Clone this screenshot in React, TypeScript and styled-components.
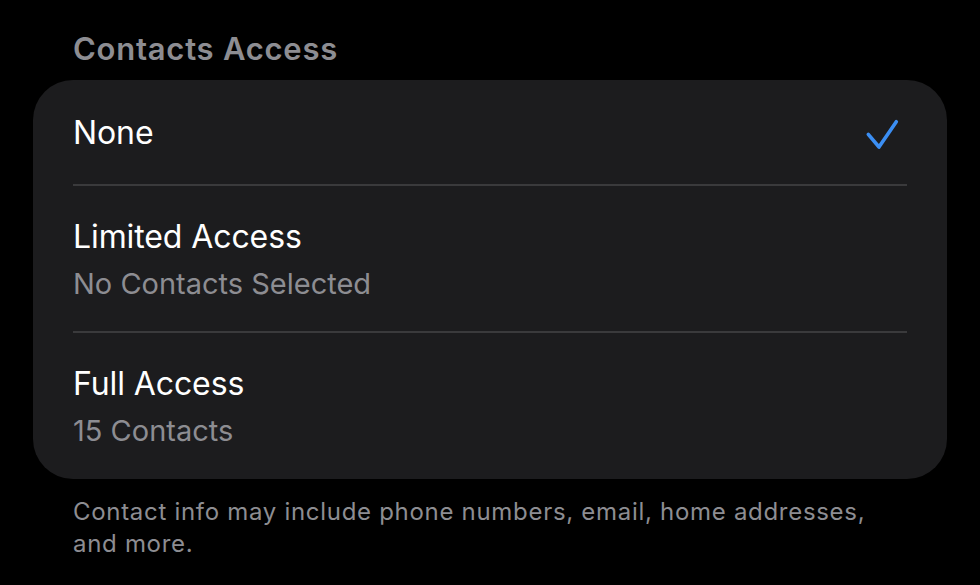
import React from "react";
import styled, { createGlobalStyle } from "styled-components";

const GlobalStyle = createGlobalStyle`
  html, body {
    margin: 0;
    padding: 0;
    background: #000000;
  }
  body {
    font-family: Inter, "Noto Sans", "Liberation Sans", sans-serif;
    -webkit-font-smoothing: antialiased;
  }
`;

const Page = styled.div`
  width: 980px;
  height: 585px;
  background: #000000;
  box-sizing: border-box;
  padding: 30px 33px 0 33px;
  overflow: hidden;
`;

const SectionHeader = styled.div`
  padding: 0 40px;
  font-size: 31px;
  line-height: 38px;
  font-weight: 600;
  color: #8d8d92;
  letter-spacing: 0.75px;
  margin-bottom: 12px;
`;

const Card = styled.div`
  width: 914px;
  background: #1c1c1e;
  border-radius: 40px;
  overflow: hidden;
`;

const Row = styled.div<{ $last?: boolean; $single?: boolean }>`
  margin: 0 40px;
  padding: ${(p) => (p.$single ? "33px 0 31px 0" : p.$last ? "31px 0 28px 0" : "31px 0 27px 0")};
  display: flex;
  align-items: center;
  justify-content: space-between;
  border-bottom: ${(p) => (p.$last ? "none" : "2px solid #3a3a3c")};
`;

const RowText = styled.div`
  display: flex;
  flex-direction: column;
  gap: 7px;
`;

const Title = styled.div`
  font-size: 32px;
  line-height: 40px;
  font-weight: 400;
  color: #ffffff;
  letter-spacing: -0.1px;
`;

const Subtitle = styled.div`
  font-size: 29px;
  line-height: 40px;
  font-weight: 400;
  color: #8d8d92;
  letter-spacing: 0px;
`;

const Check = styled.svg`
  width: 42px;
  height: 34px;
  flex: none;
  display: block;
`;

const Footer = styled.div`
  padding: 0 40px;
  margin-top: 17px;
  font-size: 24px;
  line-height: 32px;
  color: #8d8d92;
  letter-spacing: 0.7px;
`;

type Option = { title: string; subtitle?: string; selected?: boolean };

const options: Option[] = [
  { title: "None", selected: true },
  { title: "Limited Access", subtitle: "No Contacts Selected" },
  { title: "Full Access", subtitle: "15 Contacts" },
];

export default function App() {
  return (
    <>
      <GlobalStyle />
      <Page>
        <SectionHeader>Contacts Access</SectionHeader>
        <Card>
          {options.map((o, i) => (
            <Row key={o.title} $single={!o.subtitle} $last={i === options.length - 1}>
              <RowText>
                <Title>{o.title}</Title>
                {o.subtitle && <Subtitle>{o.subtitle}</Subtitle>}
              </RowText>
              {o.selected && (
                <Check viewBox="0 0 42 34">
                  <polyline
                    points="3.3,18.3 14,31 31.3,5.7"
                    fill="none"
                    stroke="#3b8ef3"
                    strokeWidth="3.6"
                    strokeLinecap="round"
                    strokeLinejoin="round"
                  />
                </Check>
              )}
            </Row>
          ))}
        </Card>
        <Footer>
          Contact info may include phone numbers, email, home addresses, and more.
        </Footer>
      </Page>
    </>
  );
}
